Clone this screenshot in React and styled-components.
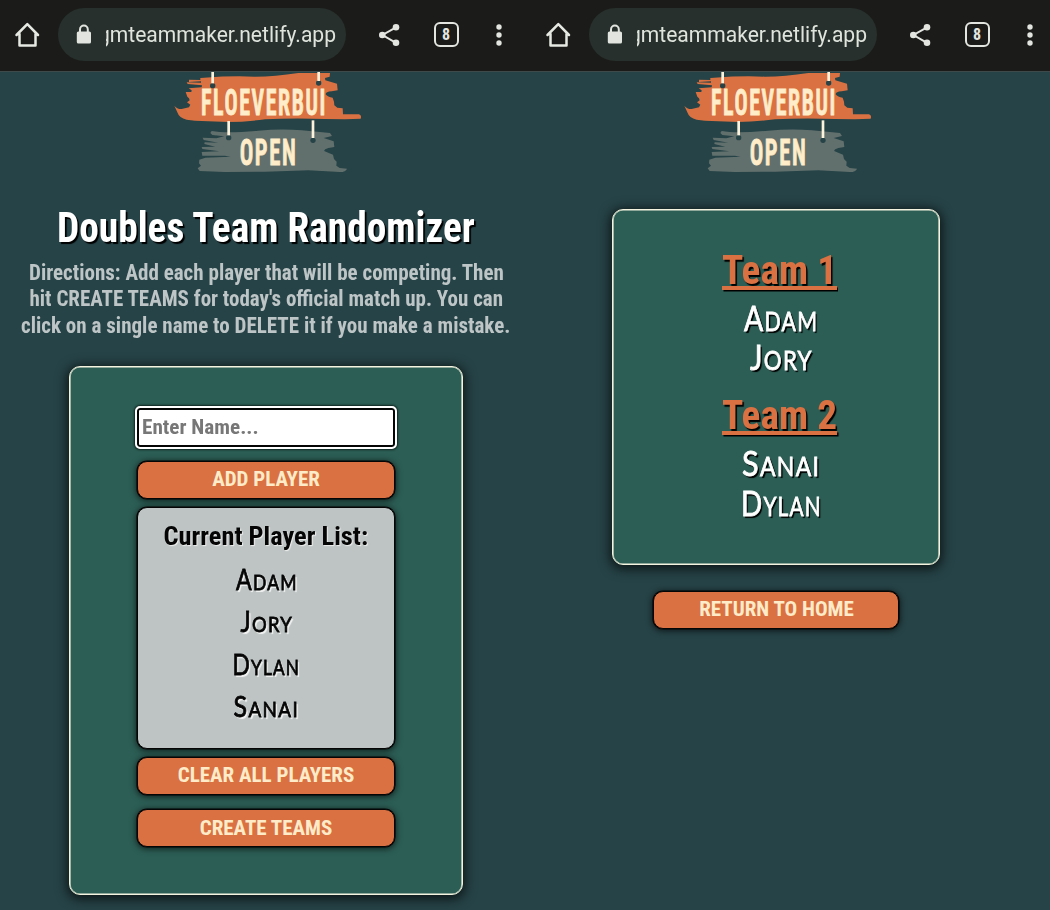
import React, { useLayoutEffect, useRef, useState } from "react";
import styled, { createGlobalStyle } from "styled-components";

const GlobalStyle = createGlobalStyle`
  * { box-sizing: border-box; }
  body { margin: 0; background: #264347; }
  h1, h2, p, ul { margin: 0; padding: 0; font-weight: 700; }
  ul { list-style: none; }
`;

const condensed = `"Roboto Condensed", Roboto, "Liberation Sans", sans-serif`;

const Screens = styled.main`
  display: grid;
  grid-template-columns: 531px 519px;
  width: 1050px;
  height: 910px;
  overflow: hidden;
  background: #264347;
  font-family: ${condensed};
`;

const Screen = styled.section`
  min-width: 0;
  overflow: hidden;
`;

const Toolbar = styled.header`
  display: flex;
  align-items: center;
  width: 531px;
  height: 72px;
  padding: 0 26px 2px 14px;
  background: #1b1c1a;
  border-bottom: 1px solid #3e4a4a;
`;

const AddressPill = styled.div`
  display: flex;
  align-items: center;
  width: 288px;
  height: 53px;
  margin: 0 29.5px 0 17px;
  padding: 0 10px 0 16px;
  border-radius: 27px;
  background: #27302c;
`;

const Address = styled.div`
  display: flex;
  justify-content: flex-end;
  width: 230px;
  margin-left: 12px;
  overflow: hidden;
  color: #dfe4dd;
  font: 400 21.5px/30px Roboto, sans-serif;
`;

const ToolIcon = styled.svg`
  flex: none;
  display: block;
  margin-right: ${(p) => p.$gap || 0}px;
`;

const TabCount = styled.div`
  flex: none;
  width: 25px;
  height: 25px;
  margin-right: 37px;
  border: 2.5px solid #e3e6e0;
  border-radius: 6px;
  color: #e3e6e0;
  font: 700 16px/21px ${condensed};
  font-stretch: 75%;
  text-align: center;
`;

const Page = styled.div`
  display: flex;
  flex-direction: column;
  align-items: center;
  padding-right: ${(p) => p.$inset}px;
`;

const TeamBlock = styled.section`
  padding-left: 8px;
`;

const Logo = styled.svg`
  display: block;
  margin-left: ${(p) => p.$shift}px;
`;

const Squeezed = styled.span`
  flex: none;
  display: inline-block;
  white-space: nowrap;
  font-stretch: ${(p) => (p.$wide ? "100%" : "75%")};
  transform-origin: ${(p) => p.$align} center;
`;

const Title = styled.h1`
  display: flex;
  justify-content: center;
  margin-top: 23px;
  padding-left: 1px;
  color: #fff;
  font-size: 42px;
  line-height: 49px;
  text-shadow: 2px 2px 1px #000;
`;

const Directions = styled.p`
  margin-top: 8px;
  padding-left: 1px;
  color: #bec5c6;
  font-size: 21.3px;
  line-height: 26.3px;
`;

const Line = styled.span`
  display: flex;
  justify-content: center;
  width: 500px;
`;

const Card = styled.div`
  display: flex;
  flex-direction: column;
  align-items: center;
  width: ${(p) => p.$width}px;
  height: ${(p) => p.$height}px;
  margin-top: ${(p) => p.$top}px;
  padding-top: ${(p) => p.$pad}px;
  border: 1px solid #f3f3df;
  border-radius: 11px;
  background: #2c5e55;
  box-shadow: inset 0 0 0 0.6px #f3f3df, 0 2px 12px 2px rgba(0, 0, 0, 0.7);
`;

const NameField = styled.div`
  display: flex;
  align-items: center;
  width: 262px;
  height: 43px;
  padding: 0 4px 1px 5px;
  border: 2px solid #fff;
  border-radius: 5px;
  background: #fff;
  box-shadow: inset 0 0 0 2px #050505, 0 0 2px 1px #10241f;
  color: #777;
  font-size: 21px;
  font-weight: 700;
`;

const ActionButton = styled.button`
  display: flex;
  align-items: center;
  justify-content: center;
  flex: none;
  width: ${(p) => p.$width || 258}px;
  height: 38px;
  margin: ${(p) => p.$top}px 0 0;
  padding: 0 0 1px 1px;
  border: 1px solid #050505;
  border-radius: 10px;
  background: #d97142;
  box-shadow: 0 0 0 0.6px #050505, 0 1px 6px 1px rgba(0, 0, 0, 0.65);
  color: #ffebc8;
  font: 700 21px/24px ${condensed};
`;

const PlayerPanel = styled.div`
  width: 258px;
  height: 242px;
  margin-top: 8px;
  padding-top: 12px;
  border: 1px solid #050505;
  border-radius: 10px;
  background: #bec4c4;
  box-shadow: 0 0 0 0.6px #050505, 0 1px 6px 1px rgba(0, 0, 0, 0.65);
`;

const PanelTitle = styled.h2`
  display: flex;
  justify-content: center;
  margin-bottom: 5px;
  color: #050505;
  font-size: 25.5px;
  line-height: 33px;
  text-shadow: 1px 1px 1px #eee;
`;

const Name = styled.li`
  display: flex;
  justify-content: center;
  height: ${(p) => (p.$large ? 39.5 : 42.4)}px;
  padding-left: 2px;
  color: ${(p) => (p.$large ? "#fff" : "#050505")};
  font-family: Lato, sans-serif;
  font-size: ${(p) => (p.$large ? 26.5 : 21.5)}px;
  font-weight: 400;
  letter-spacing: 1.5px;
  line-height: ${(p) => (p.$large ? 39.5 : 42.4)}px;
  text-transform: uppercase;
  text-shadow: ${(p) => (p.$large ? "2px 2px 1px #000" : "2px 2px 1px #f4f4f4")};
  -webkit-text-stroke: 0.8px currentColor;

  span::first-letter {
    font-size: ${(p) => (p.$large ? 35.5 : 28.5)}px;
  }
`;

const Members = styled.ul`
  padding-top: 3px;
`;

const TeamTitle = styled.h2`
  display: flex;
  justify-content: center;
  margin-top: ${(p) => p.$top || 0}px;
  color: #d97142;
  font-size: 40px;
  line-height: 48px;
  text-decoration: underline;
  text-decoration-thickness: 3.5px;
  text-underline-offset: 2px;
  text-decoration-skip-ink: none;
  text-shadow: 1.5px 1.5px 1px #000;

  span {
    text-decoration: inherit;
  }
`;

/* Sets text at an exact width by scaling its glyphs horizontally. */
function Fit({ width, align = "center", wide, children }) {
  const ref = useRef(null);
  const [scale, setScale] = useState(1);
  useLayoutEffect(() => {
    setScale(width / ref.current.offsetWidth);
  }, [width, children]);
  return (
    <Squeezed ref={ref} $align={align} $wide={wide} style={{ transform: `scaleX(${scale})` }}>
      {children}
    </Squeezed>
  );
}

function BrowserBar() {
  return (
    <Toolbar>
      <ToolIcon width="27" height="28" viewBox="0 0 27 28" fill="none" stroke="#e6e8e2" strokeWidth="2.5" strokeLinejoin="round" strokeLinecap="round">
        <path d="M2.5 14 13.3 3.2 24 14M5.5 13v11.5h16V13" />
      </ToolIcon>
      <AddressPill>
        <ToolIcon width="20" height="22" viewBox="0 0 20 22">
          <rect x="2.8" y="7.4" width="14.2" height="12.2" rx="1.6" fill="#e2e5df" />
          <path d="M6 9V5.4a3.9 3.9 0 0 1 7.8 0v3" fill="none" stroke="#e2e5df" strokeWidth="2" />
        </ToolIcon>
        <Address>
          <Fit width={238} align="right" wide>gmteammaker.netlify.app</Fit>
        </Address>
      </AddressPill>
      <ToolIcon $gap={31} width="27" height="26" viewBox="0 0 27 26" fill="#e3e6e0">
        <path d="M20 5.4 6.5 13 20 20.8" fill="none" stroke="#e3e6e0" strokeWidth="2" />
        <circle cx="20" cy="5.3" r="3.3" />
        <circle cx="6.3" cy="13" r="3.3" />
        <circle cx="20" cy="20.8" r="3.3" />
      </ToolIcon>
      <TabCount>8</TabCount>
      <ToolIcon width="6" height="24" viewBox="0 0 6 24" fill="#e3e6e0">
        <circle cx="3" cy="4" r="2.7" />
        <circle cx="3" cy="12" r="2.7" />
        <circle cx="3" cy="20" r="2.7" />
      </ToolIcon>
    </Toolbar>
  );
}

const SignText = styled.text`
  fill: #ffecc9;
  stroke: #ffecc9;
  stroke-width: 3px;
  font-family: ${condensed};
  font-stretch: 75%;
  font-weight: 600;
  font-size: 110px;
  letter-spacing: 8px;
`;

function Sign({ shift }) {
  return (
    <Logo $shift={shift} width="210" height="108" viewBox="0 21 630 324">
      <path
        fill="#d97142"
        d="M118 38Q200 32 270 35Q330 35 400 24L495 24L494 35L480 39L481 46L516 56L518 76L500 79Q482 80 482 88Q488 97 503 98L507 110L508 121L517 128L533 130L534 148L582 148Q591 151 587 161L540 163L480 162Q380 159 300 163Q240 171 190 171L90 167L65 164Q42 158 38 144L28 122Q37 133 50 132L72 127L76 119L66 112L74 106L72 100L67 95L62 81L79 81L80 76L71 70L110 67L111 61L68 57L65 52L108 53L108 49L72 51L72 44L106 45L106 39Z"
      />
      <path
        fill="#62706d"
        d="M140 198Q185 206 280 197Q350 190 410 196L495 204L501 213L476 219L506 229L508 246L490 249Q474 254 479 259L504 269L507 282L515 290L514 302L524 309L546 311Q542 321 525 321L430 316L300 320L180 321L104 318L98 310L108 302L102 295L103 284L121 278L197 275L180 272L112 272L110 261L163 259L112 252L110 246L151 245L118 237L119 232L160 233L116 225L113 218L154 220L178 214L142 210L136 204Z"
      />
      <g fill="#264347">
        <circle cx="143" cy="62" r="8" />
        <circle cx="461" cy="54" r="8" />
        <circle cx="191" cy="218" r="8" />
        <circle cx="444" cy="226" r="8" />
      </g>
      <g fill="#fdf3dc">
        <rect x="139" y="21" width="8" height="34" />
        <rect x="457" y="21" width="8" height="27" />
        <rect x="187" y="168" width="8" height="43" />
        <rect x="440" y="166" width="8" height="53" />
      </g>
      <SignText x="108" y="150.5" textLength="378" lengthAdjust="spacingAndGlyphs">FLOEVERBUI</SignText>
      <SignText x="224" y="299.5" textLength="173" lengthAdjust="spacingAndGlyphs">OPEN</SignText>
    </Logo>
  );
}

const directions = [
  ["Directions: Add each player that will be competing. Then", 475],
  ["hit CREATE TEAMS for today's official match up. You can", 474],
  ["click on a single name to DELETE it if you make a mistake.", 489],
];

const players = [["Adam", 62], ["Jory", 53], ["Dylan", 68], ["Sanai", 66]];

const teams = [
  { title: "Team 1", members: [["Adam", 74], ["Jory", 63]] },
  { title: "Team 2", members: [["Sanai", 78], ["Dylan", 81]] },
];

export default function App() {
  return (
    <>
      <GlobalStyle />
      <Screens>
        <Screen>
          <BrowserBar />
          <Page $inset={0}>
            <Sign shift={9} />
            <Title><Fit width={418}>Doubles Team Randomizer</Fit></Title>
            <Directions>
              {directions.map(([text, width]) => (
                <Line key={text}><Fit width={width}>{text}</Fit></Line>
              ))}
            </Directions>
            <Card $width={394} $height={529} $top={27.1} $pad={39}>
              <NameField><Fit width={117} align="left">Enter Name...</Fit></NameField>
              <ActionButton $top={12}><Fit width={108}>ADD PLAYER</Fit></ActionButton>
              <PlayerPanel>
                <PanelTitle><Fit width={205}>Current Player List:</Fit></PanelTitle>
                <ul>
                  {players.map(([name, width]) => (
                    <Name key={name}><Fit width={width}>{name}</Fit></Name>
                  ))}
                </ul>
              </PlayerPanel>
              <ActionButton $top={8}><Fit width={177}>CLEAR ALL PLAYERS</Fit></ActionButton>
              <ActionButton $top={14.4}><Fit width={133}>CREATE TEAMS</Fit></ActionButton>
            </Card>
          </Page>
        </Screen>
        <Screen>
          <BrowserBar />
          <Page $inset={29}>
            <Sign shift={8} />
            <Card $width={328} $height={356} $top={28.6} $pad={37}>
              {teams.map(({ title, members }, i) => (
                <TeamBlock key={title}>
                  <TeamTitle $top={i * 15.5}><Fit width={115}>{title}</Fit></TeamTitle>
                  <Members>
                    {members.map(([name, width]) => (
                      <Name $large key={name}><Fit width={width}>{name}</Fit></Name>
                    ))}
                  </Members>
                </TeamBlock>
              ))}
            </Card>
            <ActionButton $width={246} $top={26.4}><Fit width={155}>RETURN TO HOME</Fit></ActionButton>
          </Page>
        </Screen>
      </Screens>
    </>
  );
}
